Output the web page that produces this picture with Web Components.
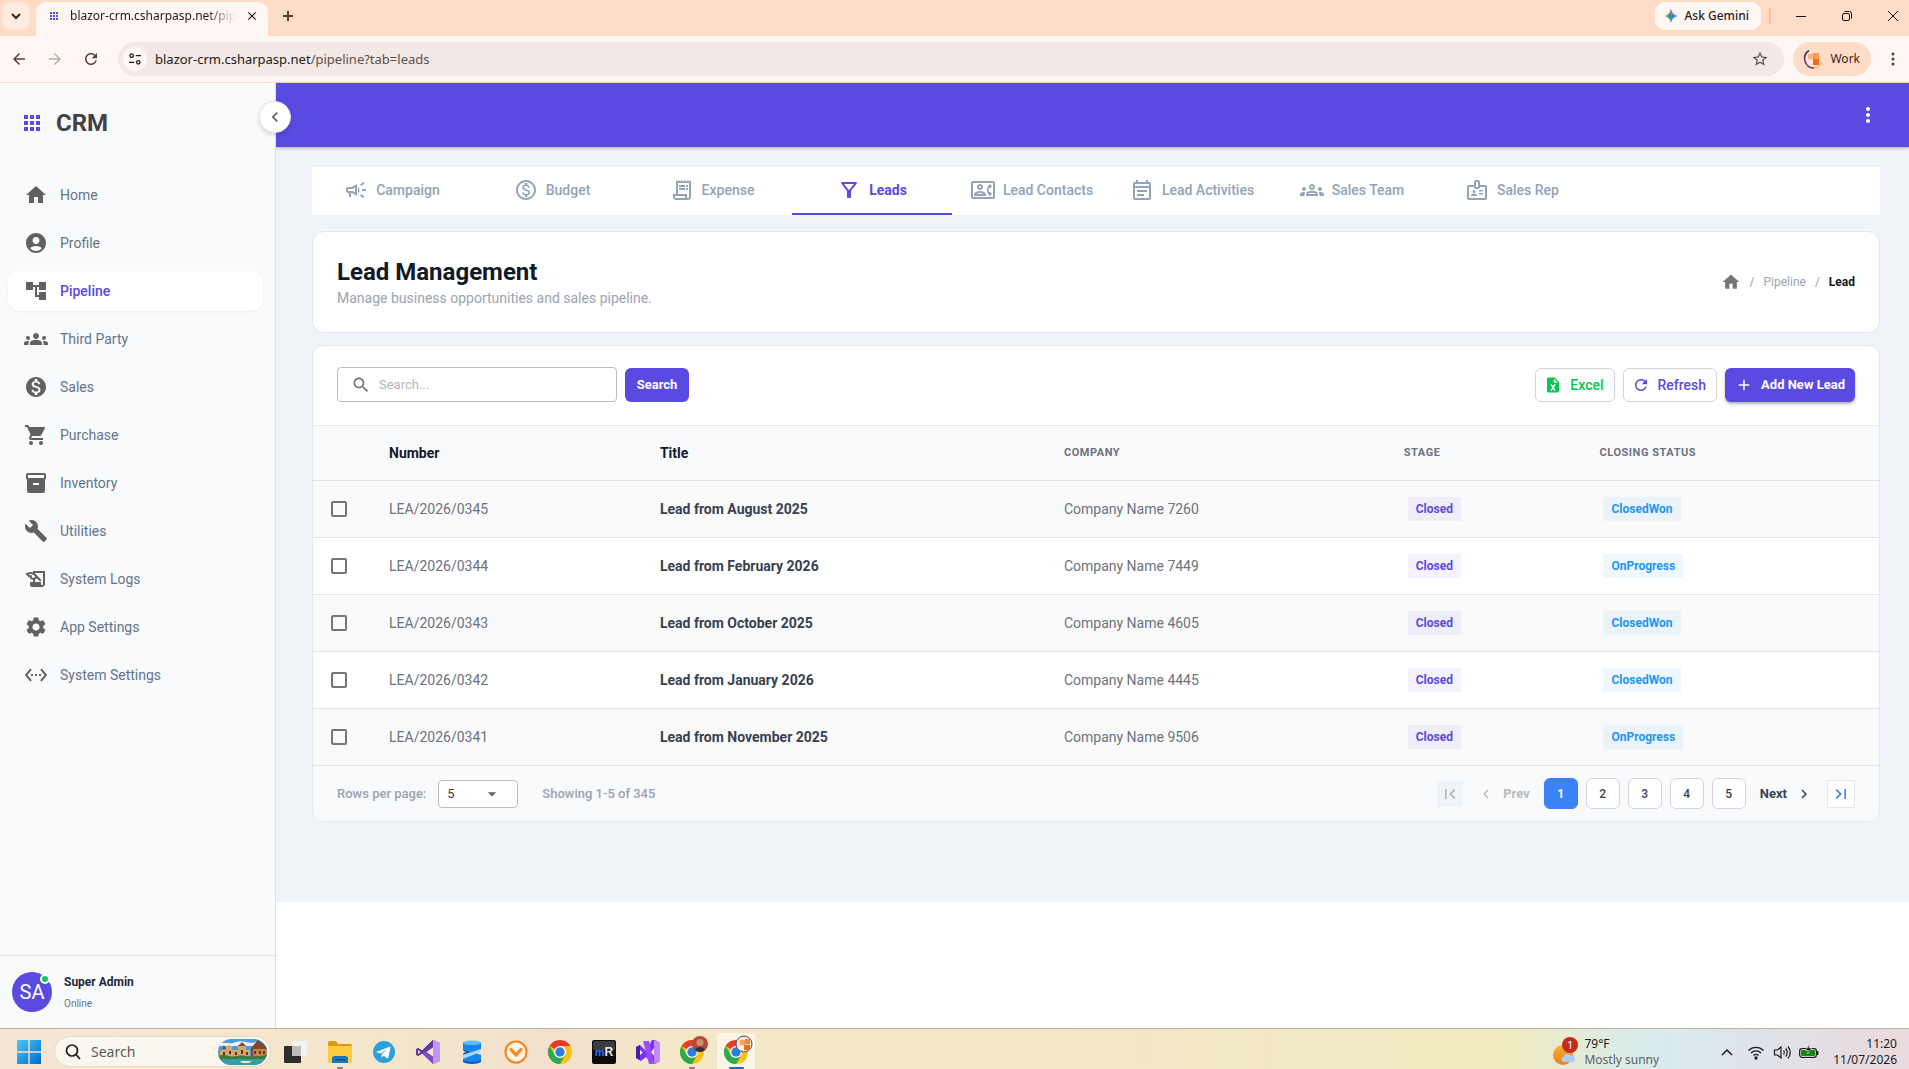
<!DOCTYPE html>
<html lang="en">
<head>
<meta charset="utf-8">
<title>CRM - Lead Management</title>
<style>
  html, body { margin: 0; }
  body {
    min-height: 100vh;
    display: flex;
    flex-direction: column;
    background: #fff;
    font-family: Roboto, "Liberation Sans", sans-serif;
    font-size: 14px;
    line-height: 20px;
    color: #424242;
  }
  crm-app { flex: 1; }
</style>
</head>
<body>
<browser-tabs></browser-tabs>
<browser-toolbar></browser-toolbar>
<crm-app>
  <crm-sidebar slot="sidebar">
    <nav-item icon="home">Home</nav-item>
    <nav-item icon="profile">Profile</nav-item>
    <nav-item icon="tree" active>Pipeline</nav-item>
    <nav-item icon="groups">Third Party</nav-item>
    <nav-item icon="money">Sales</nav-item>
    <nav-item icon="cart">Purchase</nav-item>
    <nav-item icon="inventory">Inventory</nav-item>
    <nav-item icon="build">Utilities</nav-item>
    <nav-item icon="history">System Logs</nav-item>
    <nav-item icon="settings">App Settings</nav-item>
    <nav-item icon="ethernet">System Settings</nav-item>
  </crm-sidebar>
  <app-bar slot="bar"></app-bar>
  <tab-bar>
    <tab-item icon="campaign">Campaign</tab-item>
    <tab-item icon="moneyOutline">Budget</tab-item>
    <tab-item icon="receipt">Expense</tab-item>
    <tab-item icon="filter" active>Leads</tab-item>
    <tab-item icon="contact">Lead Contacts</tab-item>
    <tab-item icon="event">Lead Activities</tab-item>
    <tab-item icon="groupsOutline">Sales Team</tab-item>
    <tab-item icon="badge">Sales Rep</tab-item>
  </tab-bar>
  <page-header>
    <span slot="title">Lead Management</span>
    <span slot="subtitle">Manage business opportunities and sales pipeline.</span>
  </page-header>
  <lead-table></lead-table>
</crm-app>
<os-taskbar></os-taskbar>

<script>
const BASE = `
  :host, *, *::before, *::after { box-sizing: border-box; }
  :host([hidden]) { display: none; }
  button, input, select { font: inherit; color: inherit; margin: 0; padding: 0; border: 0; background: none; }
  button { display: inline-flex; align-items: center; justify-content: center; cursor: pointer; }
  a { color: inherit; text-decoration: none; }
  svg { display: block; }
`;

function define(name, css, html, setup) {
  customElements.define(name, class extends HTMLElement {
    connectedCallback() {
      if (this.shadowRoot) return;
      const root = this.attachShadow({ mode: 'open' });
      root.innerHTML = `<style>${BASE}${css}</style>` + (typeof html === 'function' ? html(this) : html);
      if (setup) setup(this, root);
    }
  });
}

const SIDE_PEOPLE = 'M4 13c1.1 0 2-.9 2-2s-.9-2-2-2-2 .9-2 2 .9 2 2 2zm1.13 1.1c-.37-.06-.74-.1-1.13-.1-.99 0-1.93.21-2.78.58C.48 14.9 0 15.62 0 16.43V18h4.5v-1.61c0-.83.23-1.61.63-2.29zM20 13c1.1 0 2-.9 2-2s-.9-2-2-2-2 .9-2 2 .9 2 2 2zm4 3.43c0-.81-.48-1.53-1.22-1.85-.85-.37-1.79-.58-2.78-.58-.39 0-.76.04-1.13.1.4.68.63 1.46.63 2.29V18H24v-1.57z';
const ICONS = {
  home: 'M10 20v-6h4v6h5v-8h3L12 3 2 12h3v8z',
  profile: 'M12 2C6.48 2 2 6.48 2 12s4.48 10 10 10 10-4.48 10-10S17.52 2 12 2zm0 4c1.93 0 3.5 1.57 3.5 3.5S13.93 13 12 13s-3.5-1.57-3.5-3.5S10.07 6 12 6zm0 14c-2.03 0-4.43-.82-6.14-2.88C7.55 15.8 9.68 15 12 15s4.45.8 6.14 2.12C16.43 19.18 14.03 20 12 20z',
  tree: 'M22 11V3h-7v3H9V3H2v8h7V8h2v10h4v3h7v-8h-7v3h-2V8h2v3z',
  groups: 'M12 12.75c1.63 0 3.07.39 4.24.9 1.08.48 1.76 1.56 1.76 2.73V18H6v-1.61c0-1.18.68-2.26 1.76-2.73 1.17-.52 2.61-.91 4.24-.91zM12 6c1.66 0 3 1.34 3 3s-1.34 3-3 3-3-1.34-3-3 1.34-3 3-3z' + SIDE_PEOPLE,
  groupsOutline: SIDE_PEOPLE + 'M16.24 13.65c-1.17-.52-2.61-.9-4.24-.9s-3.07.39-4.24.9C6.68 14.13 6 15.21 6 16.39V18h12v-1.61c0-1.18-.68-2.26-1.76-2.74zM8.07 16c.09-.23.13-.39.91-.69.97-.38 1.99-.56 3.02-.56s2.05.18 3.02.56c.77.3.81.46.91.69H8.07zM12 8c.55 0 1 .45 1 1s-.45 1-1 1-1-.45-1-1 .45-1 1-1m0-2c-1.66 0-3 1.34-3 3s1.34 3 3 3 3-1.34 3-3-1.34-3-3-3z',
  money: 'M12 2C6.48 2 2 6.48 2 12s4.48 10 10 10 10-4.48 10-10S17.52 2 12 2zm1.41 16.09V20h-2.67v-1.93c-1.71-.36-3.16-1.46-3.27-3.4h1.96c.1 1.05.82 1.87 2.65 1.87 1.96 0 2.4-.98 2.4-1.59 0-.83-.44-1.61-2.67-2.14-2.48-.6-4.18-1.62-4.18-3.67 0-1.72 1.39-2.84 3.11-3.21V4h2.67v1.95c1.86.45 2.79 1.86 2.85 3.39H14.3c-.05-1.11-.64-1.87-2.22-1.87-1.5 0-2.4.68-2.4 1.64 0 .84.65 1.39 2.67 1.91s4.18 1.39 4.18 3.91c-.01 1.83-1.38 2.83-3.12 3.16z',
  moneyOutline: 'M12 2C6.48 2 2 6.48 2 12s4.48 10 10 10 10-4.48 10-10S17.52 2 12 2zm0 18c-4.41 0-8-3.59-8-8s3.59-8 8-8 8 3.59 8 8-3.59 8-8 8zm.31-8.86c-1.77-.45-2.34-.94-2.34-1.67 0-.84.79-1.43 2.1-1.43 1.38 0 1.9.66 1.94 1.64h1.71c-.05-1.34-.87-2.57-2.49-2.97V5H10.9v1.69c-1.51.32-2.72 1.3-2.72 2.81 0 1.79 1.49 2.69 3.66 3.21 1.95.46 2.34 1.15 2.34 1.87 0 .53-.39 1.39-2.1 1.39-1.6 0-2.23-.72-2.32-1.64H8.04c.1 1.7 1.36 2.66 2.86 2.97V19h2.34v-1.67c1.52-.29 2.72-1.16 2.73-2.77-.01-2.2-1.9-2.96-3.66-3.42z',
  cart: 'M7 18c-1.1 0-1.99.9-1.99 2S5.9 22 7 22s2-.9 2-2-.9-2-2-2zM1 2v2h2l3.6 7.59-1.35 2.45c-.16.28-.25.61-.25.96 0 1.1.9 2 2 2h12v-2H7.42c-.14 0-.25-.11-.25-.25l.03-.12.9-1.63h7.45c.75 0 1.41-.41 1.75-1.03l3.58-6.49c.08-.14.12-.31.12-.48 0-.55-.45-1-1-1H5.21l-.94-2H1zm16 16c-1.1 0-1.99.9-1.99 2s.89 2 1.99 2 2-.9 2-2-.9-2-2-2z',
  inventory: 'M20 2H4c-1 0-2 .9-2 2v3.01c0 .72.43 1.34 1 1.69V20c0 1.1 1.1 2 2 2h14c.9 0 2-.9 2-2V8.7c.57-.35 1-.97 1-1.69V4c0-1.1-1-2-2-2zm-5 12H9v-2h6v2zm5-7H4V4h16v3z',
  build: 'M22.7 19l-9.1-9.1c.9-2.3.4-5-1.5-6.9-2-2-5-2.4-7.4-1.3L9 6 6 9 1.6 4.7C.4 7.1.9 10.1 2.9 12.1c1.9 1.9 4.6 2.4 6.9 1.5l9.1 9.1c.4.4 1 .4 1.4 0l2.3-2.3c.5-.4.5-1.1.1-1.4z',
  history: 'M9 4v1.38c-.83-.33-1.72-.5-2.61-.5-1.79 0-3.58.68-4.95 2.05l3.33 3.33h1.11v1.11c.86.86 1.98 1.31 3.11 1.36V15H6v3c0 1.1.9 2 2 2h10c1.66 0 3-1.34 3-3V4H9zm-1.11 6.41V8.26H5.61L4.57 7.22a5.07 5.07 0 0 1 1.82-.34c1.34 0 2.59.52 3.54 1.46l1.41 1.41-.2.2a2.7 2.7 0 0 1-1.92.8c-.47 0-.93-.12-1.33-.34zM19 17c0 .55-.45 1-1 1s-1-.45-1-1v-2h-6v-2.59c.57-.23 1.1-.57 1.56-1.03l.2-.2L15.59 14H17v-1.41l-6-5.97V6h8v11z',
  settings: 'M19.14 12.94c.04-.3.06-.61.06-.94 0-.32-.02-.64-.07-.94l2.03-1.58c.18-.14.23-.41.12-.61l-1.92-3.32c-.12-.22-.37-.29-.59-.22l-2.39.96c-.5-.38-1.03-.7-1.62-.94l-.36-2.54c-.04-.24-.24-.41-.48-.41h-3.84c-.24 0-.43.17-.47.41l-.36 2.54c-.59.24-1.13.57-1.62.94l-2.39-.96c-.22-.08-.47 0-.59.22L2.74 8.87c-.12.21-.08.47.12.61l2.03 1.58c-.05.3-.09.63-.09.94s.02.64.07.94l-2.03 1.58c-.18.14-.23.41-.12.61l1.92 3.32c.12.22.37.29.59.22l2.39-.96c.5.38 1.03.7 1.62.94l.36 2.54c.05.24.24.41.48.41h3.84c.24 0 .44-.17.47-.41l.36-2.54c.59-.24 1.13-.56 1.62-.94l2.39.96c.22.08.47 0 .59-.22l1.92-3.32c.12-.22.07-.47-.12-.61l-2.01-1.58zM12 15.6c-1.98 0-3.6-1.62-3.6-3.6s1.62-3.6 3.6-3.6 3.6 1.62 3.6 3.6-1.62 3.6-3.6 3.6z',
  ethernet: 'M7.77 6.76L6.23 5.48.82 12l5.41 6.52 1.54-1.28L3.42 12l4.35-5.24zM7 13h2v-2H7v2zm10-2h-2v2h2v-2zm-6 2h2v-2h-2v2zm6.77-7.52l-1.54 1.28L20.58 12l-4.35 5.24 1.54 1.28L23.18 12l-5.41-6.52z',
  apps: 'M4 8h4V4H4v4zm6 12h4v-4h-4v4zm-6 0h4v-4H4v4zm0-6h4v-4H4v4zm6 0h4v-4h-4v4zm6-10v4h4V4h-4zm-6 4h4V4h-4v4zm6 6h4v-4h-4v4zm0 6h4v-4h-4v4z',
  left: 'M15.41 7.41L14 6l-6 6 6 6 1.41-1.41L10.83 12z',
  right: 'M10 6L8.59 7.41 13.17 12l-4.58 4.59L10 18l6-6z',
  campaign: 'M18 11v2h4v-2h-4zm-2 6.61c.96.71 2.21 1.65 3.2 2.39.4-.53.8-1.07 1.2-1.6-.99-.74-2.24-1.68-3.2-2.4-.4.54-.8 1.08-1.2 1.61zM20.4 5.6c-.4-.53-.8-1.07-1.2-1.6-.99.74-2.24 1.68-3.2 2.4.4.53.8 1.07 1.2 1.6.96-.72 2.21-1.65 3.2-2.4zM4 9c-1.1 0-2 .9-2 2v2c0 1.1.9 2 2 2h1v4h2v-4h1l5 3V6L8 9H4zm5.03 1.71L11 9.53v4.94l-1.97-1.18-.48-.29H4v-2h4.55l.48-.29zM15.5 12c0-1.33-.58-2.53-1.5-3.35v6.69c.92-.81 1.5-2.01 1.5-3.34z',
  receipt: 'M19.5 3.5L18 2l-1.5 1.5L15 2l-1.5 1.5L12 2l-1.5 1.5L9 2 7.5 3.5 6 2v14H3v3c0 1.66 1.34 3 3 3h12c1.66 0 3-1.34 3-3V2l-1.5 1.5zM15 20H6c-.55 0-1-.45-1-1v-1h10v2zm4-1c0 .55-.45 1-1 1s-1-.45-1-1v-3H8V5h11v14zM9 7h6v2H9zM16 7h2v2h-2zM9 10h6v2H9zM16 10h2v2h-2z',
  filter: 'M7 6h10l-5.01 6.3L7 6zm-2.75-.39C6.27 8.2 10 13 10 13v6c0 .55.45 1 1 1h2c.55 0 1-.45 1-1v-6s3.72-4.8 5.74-7.39c.51-.66.04-1.61-.79-1.61H5.04c-.83 0-1.3.95-.79 1.61z',
  contact: 'M22 3H2C.9 3 0 3.9 0 5v14c0 1.1.9 2 2 2h20c1.1 0 1.99-.9 1.99-2L24 5c0-1.1-.9-2-2-2zm0 16H2V5h20v14zm-2.99-1.01L21 16l-1.51-2h-1.64c-.22-.63-.35-1.3-.35-2s.13-1.37.35-2h1.64L21 8l-1.99-1.99c-1.31.98-2.28 2.37-2.73 3.99-.18.64-.28 1.31-.28 2s.1 1.36.28 2c.45 1.61 1.42 3.01 2.73 3.99zM9 12c1.65 0 3-1.35 3-3s-1.35-3-3-3-3 1.35-3 3 1.35 3 3 3zm0-4c.55 0 1 .45 1 1s-.45 1-1 1-1-.45-1-1 .45-1 1-1zm6 8.59c0-2.5-3.97-3.58-6-3.58s-6 1.08-6 3.58V18h12v-1.41zM5.48 16c.74-.5 2.22-1 3.52-1s2.77.49 3.52 1H5.48z',
  event: 'M19 4h-1V2h-2v2H8V2H6v2H5c-1.11 0-1.99.9-1.99 2L3 20c0 1.1.89 2 2 2h14c1.1 0 2-.9 2-2V6c0-1.1-.9-2-2-2zm0 16H5V10h14v10zm0-12H5V6h14v2zM7 12h10v2H7zm0 4h7v2H7z',
  badge: 'M20 7h-5V4c0-1.1-.9-2-2-2h-2c-1.1 0-2 .9-2 2v3H4c-1.1 0-2 .9-2 2v11c0 1.1.9 2 2 2h16c1.1 0 2-.9 2-2V9c0-1.1-.9-2-2-2zm-9-3h2v5h-2V4zm9 16H4V9h5c0 1.1.9 2 2 2h2c1.1 0 2-.9 2-2h5v11zM9 12a1.5 1.5 0 1 0 0 3 1.5 1.5 0 0 0 0-3zM11.08 16.18C10.44 15.9 9.74 15.75 9 15.75s-1.44.15-2.08.43c-.55.24-.92.78-.92 1.39V18h6v-.43c0-.61-.36-1.15-.92-1.39zM14 15h4v1.5h-4zM14 12h4v1.5h-4z',
  search: 'M15.5 14h-.79l-.28-.27C15.41 12.59 16 11.11 16 9.5 16 5.91 13.09 3 9.5 3S3 5.91 3 9.5 5.91 16 9.5 16c1.61 0 3.09-.59 4.23-1.57l.27.28v.79l5 4.99L20.49 19l-4.99-5zm-6 0C7.01 14 5 11.99 5 9.5S7.01 5 9.5 5 14 7.01 14 9.5 11.99 14 9.5 14z',
  refresh: 'M17.65 6.35C16.2 4.9 14.21 4 12 4c-4.42 0-7.99 3.58-7.99 8s3.57 8 7.99 8c3.73 0 6.84-2.55 7.73-6h-2.08c-.82 2.33-3.04 4-5.65 4-3.31 0-6-2.69-6-6s2.69-6 6-6c1.66 0 3.14.69 4.22 1.78L13 11h7V4l-2.35 2.35z',
  excel: 'M14 2H6c-1.1 0-2 .9-2 2v16c0 1.1.9 2 2 2h12c1.1 0 2-.9 2-2V8l-6-6zm-1 7V3.500L18.500 9H13zM8.400 11h2.200l1.500 2.800 1.500-2.800h2.200l-2.600 4.300 2.700 4.500h-2.200l-1.600-2.900-1.600 2.900H8.300l2.700-4.500z',
  add: 'M19 13h-6v6h-2v-6H5v-2h6V5h2v6h6v2z',
  first: 'M18.41 16.59L13.82 12l4.59-4.59L17 6l-6 6 6 6zM6 6h2v12H6z',
  last: 'M5.59 7.41L10.18 12l-4.59 4.59L7 18l6-6-6-6zM16 6h2v12h-2z',
  drop: 'M7 10l5 5 5-5z',
  more: 'M12 8c1.1 0 2-.9 2-2s-.9-2-2-2-2 .9-2 2 .9 2 2 2zm0 2c-1.100 0-2 .9-2 2s.9 2 2 2 2-.9 2-2-.9-2-2-2zm0 6c-1.100 0-2 .9-2 2s.9 2 2 2 2-.9 2-2-.9-2-2-2z',
  star: 'M22 9.240l-7.190-.62L12 2 9.190 8.630 2 9.240l5.460 4.730L5.820 21 12 17.270 18.180 21l-1.630-7.030L22 9.240zM12 15.400l-3.760 2.270 1-4.280-3.320-2.880 4.380-.38L12 6.100l1.710 4.040 4.380.38-3.320 2.880 1 4.280L12 15.400z',
  back: 'M20 11H7.830l5.590-5.590L12 4l-8 8 8 8 1.410-1.410L7.830 13H20v-2z',
  forward: 'M12 4l-1.410 1.410L16.170 11H4v2h12.170l-5.580 5.590L12 20l8-8z',
  close: 'M19 6.410L17.590 5 12 10.590 6.410 5 5 6.410 10.590 12 5 17.590 6.410 19 12 13.410 17.590 19 19 17.590 13.410 12z',
  tune: 'M7 3.500a3.500 3.500 0 0 1 3.400 2.600 3.500 3.500 0 1 1-3.400-2.600zM7 5.400a1.600 1.600 0 1 0 0 3.200 1.600 1.600 0 0 0 0-3.200zM13 6h8v2h-8zM3 16h8v2H3zM17 13.500a3.500 3.500 0 1 1 0 7 3.500 3.500 0 0 1 0-7zm0 1.900a1.600 1.600 0 1 0 0 3.200 1.600 1.600 0 0 0 0-3.200z'
};
const EVENODD = ['excel', 'tune'];

/* Monochrome icon: <x-icon name="home" size="24"> */
define('x-icon', `
  :host { display: inline-flex; flex: none; }
`, el => {
  const s = el.getAttribute('size') || 24;
  const n = el.getAttribute('name');
  return `<svg width="${s}" height="${s}" viewBox="0 0 24 24" fill="currentColor" aria-hidden="true"><path fill-rule="${EVENODD.includes(n) ? 'evenodd' : 'nonzero'}" d="${ICONS[n]}"/></svg>`;
});

/* ---------- Browser chrome ---------- */
define('browser-tabs', `
  :host { display: flex; align-items: flex-start; height: 36px; padding: 2px 0 0 2px; background: #ffdcc8; color: #3b1f10;
          font: 12px/16px "Noto Sans", "Open Sans", sans-serif; }
  .round { width: 28px; height: 28px; border-radius: 10px; background: #ffebe0; }
  .tab { display: flex; align-items: center; gap: 8px; width: 232px; height: 34px; margin: 0 10px 0 6px; padding: 0 8px 6px 10px;
         background: #fff7f4; border-radius: 10px 10px 0 0; color: #1f1a18; }
  .tab .title { flex: 1; min-width: 0; white-space: nowrap;
         -webkit-mask-image: linear-gradient(90deg, #000 82%, transparent); mask-image: linear-gradient(90deg, #000 82%, transparent); }
  .tab button { height: 16px; width: 16px; }
  .fav { display: flex; color: #594ae2; padding: 2px; }
  .new { width: 20px; height: 28px; color: #5a3d2c; }
  .fill { flex: 1; }
  .gem { gap: 6px; height: 28px; padding: 0 12px 0 9px; border-radius: 10px; background: #fff7f4; color: #2b211d; font-weight: 500; }
  .sep { width: 2px; height: 16px; margin: 6px 14px 0 8px; background: #ffbc90; }
  .controls { display: flex; gap: 14px; }
  .controls button { width: 32px; height: 28px; color: #111; }
`, `
  <button class="round" aria-label="Search tabs"><svg width="10" height="7" viewBox="0 0 10 7"><path d="M1 1l4 4 4-4" fill="none" stroke="#3b1f10" stroke-width="2"/></svg></button>
  <div class="tab">
    <span class="fav"><x-icon name="apps" size="12"></x-icon></span>
    <span class="title">blazor-crm.csharpasp.net/pipeli</span>
    <button aria-label="Close tab"><x-icon name="close" size="14"></x-icon></button>
  </div>
  <button class="new" aria-label="New tab"><svg width="12" height="12" viewBox="0 0 12 12"><path d="M6 1v10M1 6h10" stroke="currentColor" stroke-width="2"/></svg></button>
  <div class="fill"></div>
  <button class="gem">
    <svg width="14" height="14" viewBox="0 0 14 14"><defs><linearGradient id="g" x1="0" y1="0" x2="1" y2="0"><stop offset="0" stop-color="#f9bd1a"/><stop offset=".35" stop-color="#34a26a"/><stop offset=".55" stop-color="#3b82f6"/><stop offset="1" stop-color="#3186ff"/></linearGradient></defs><path d="M7 0c.7 3.900 3.100 6.300 7 7-3.900.7-6.300 3.100-7 7-.7-3.900-3.100-6.300-7-7 3.900-.7 6.300-3.100 7-7z" fill="url(#g)"/><path d="M7 0c.7 3.900 2 5 2 5L5 5s1.300-1.100 2-5z" fill="#e8535a"/></svg>
    Ask Gemini</button>
  <span class="sep"></span>
  <div class="controls">
    <button aria-label="Minimize"><svg width="10" height="10"><path d="M0 5.500h10" stroke="currentColor"/></svg></button>
    <button aria-label="Restore"><svg width="10" height="10" fill="none" stroke="currentColor"><rect x=".5" y="2.500" width="7" height="7" rx="1.500"/><path d="M2.500 .5h5a2 2 0 0 1 2 2v5"/></svg></button>
    <button aria-label="Close"><svg width="10" height="10"><path d="M0 0l10 10M10 0L0 10" stroke="currentColor"/></svg></button>
  </div>
`);

define('browser-toolbar', `
  :host { display: flex; align-items: center; height: 47px; padding: 0 7px 0 10px; background: #fff7f4; border-bottom: 1px solid #f3dccb; color: #5a4034;
          font: 14px/20px "Noto Sans", "Open Sans", sans-serif; }
  .nav { width: 18px; height: 18px; margin-right: 18px; }
  .nav[disabled] { color: #b9aca6; }
  .box { flex: 1; display: flex; align-items: center; gap: 8px; height: 34px; padding: 0 15px 0 5px; border-radius: 17px; background: #f2e8e6; color: #5b514d; }
  .info { width: 24px; height: 24px; border-radius: 12px; background: #fff8f5; color: #1f1a18; }
  .url { flex: 1; font-size: 13px; }
  .url b { font-weight: 400; color: #1f1a18; }
  .work { gap: 6px; height: 34px; margin: 0 13px 0 9px; padding: 0 11px 0 9px; border-radius: 17px; background: #ffdcc8; color: #3b1f10; font-size: 12px; }
`, `
  <button class="nav" aria-label="Back"><x-icon name="back" size="18"></x-icon></button>
  <button class="nav" aria-label="Forward" disabled><x-icon name="forward" size="18"></x-icon></button>
  <button class="nav" aria-label="Reload"><x-icon name="refresh" size="18"></x-icon></button>
  <div class="box">
    <button class="info" aria-label="Site information"><x-icon name="tune" size="16"></x-icon></button>
    <span class="url"><b>blazor-crm.csharpasp.net</b>/pipeline?tab=leads</span>
    <button aria-label="Bookmark"><x-icon name="star" size="18"></x-icon></button>
  </div>
  <button class="work">
    <svg width="22" height="22" viewBox="0 0 22 22" fill="none"><path d="M7 2.500A9.500 9.500 0 0 0 12 20" stroke="#3d4257" stroke-width="1.500"/><path d="M12 20a9.500 9.500 0 0 0 8-6" stroke="#ff9a52"/><path d="M6 6h5v5H6z" fill="#ffb37a"/><path d="M11 5h6v6h-6z" fill="#ff9a52"/><path d="M11 11h6v6h-6z" fill="#f76a10"/><path d="M7 12h4v4H7z" fill="#fff0e4"/></svg>
    Work</button>
  <button aria-label="Menu"><svg width="18" height="18"><g fill="currentColor"><circle cx="9" cy="4" r="1.500"/><circle cx="9" cy="9" r="1.500"/><circle cx="9" cy="14" r="1.500"/></g></svg></button>
`);

/* ---------- Application shell ---------- */
define('crm-app', `
  :host { display: flex; }
  .main { flex: 1; min-width: 0; }
  .content { display: flex; flex-direction: column; padding: 20px 29px 80px 36px; background: #f0f3f8; }
`, `
  <slot name="sidebar"></slot>
  <div class="main">
    <slot name="bar"></slot>
    <main class="content"><slot></slot></main>
  </div>
`);

define('crm-sidebar', `
  :host { position: relative; z-index: 2; display: flex; flex-direction: column; flex: none; width: 276px; background: #f9fafc; border-right: 1px solid #e0e0e2; }
  .brand { display: flex; align-items: center; gap: 12px; height: 80px; padding: 0 20px; font-size: 24px; line-height: 32px; font-weight: 700; color: #424242; }
  .brand x-icon { color: #594ae2; }
  nav { flex: 1; display: flex; flex-direction: column; gap: 8px; padding: 12px 12px 12px 8px; }
  .toggle { position: absolute; top: 18px; right: -16px; width: 32px; height: 32px; border-radius: 50%; background: #fff; border: 1px solid #e5e7eb; box-shadow: 0 2px 5px rgba(0,0,0,.15); color: #616161; }
  .user { display: flex; align-items: center; gap: 12px; padding: 16px 12px; height: 73px; border-top: 1px solid #e0e0e2; }
  .avatar { position: relative; display: flex; align-items: center; justify-content: center; width: 40px; height: 40px; border-radius: 50%; background: #594ae2; color: #fff; font-size: 20px; }
  .dot { position: absolute; top: 2px; right: 2px; width: 10px; height: 10px; border-radius: 50%; background: #00c853; border: 2px solid #fff; }
  .who { display: flex; flex-direction: column; gap: 4px; font-size: 10px; line-height: 16px; color: #64748b; }
  .who b { font-size: 12px; line-height: 20px; font-weight: 700; color: #1e293b; }
`, `
  <div class="brand"><x-icon name="apps" size="24"></x-icon><span>CRM</span></div>
  <button class="toggle" aria-label="Collapse sidebar"><x-icon name="left" size="20"></x-icon></button>
  <nav><slot></slot></nav>
  <div class="user">
    <div class="avatar">SA<span class="dot"></span></div>
    <div class="who"><b>Super Admin</b><span>Online</span></div>
  </div>
`);

define('nav-item', `
  :host { display: block; }
  a { display: flex; align-items: center; gap: 12px; height: 40px; padding: 0 16px; border-radius: 12px; color: #64748b; }
  x-icon { color: #616161; }
  :host([active]) a { background: #fff; color: #594ae2; font-weight: 500; box-shadow: 0 1px 3px rgba(0,0,0,.05); }
`, el => `<a href="#"><x-icon name="${el.getAttribute('icon')}"></x-icon><slot></slot></a>`);

define('app-bar', `
  :host { position: relative; z-index: 1; display: flex; align-items: center; justify-content: flex-end; height: 64px; padding: 0 29px; background: #594ae2; color: #fff; box-shadow: 0 1px 3px rgba(0,0,0,.3); }
`, `<button aria-label="More options"><x-icon name="more" size="24"></x-icon></button>`);

define('tab-bar', `
  :host { display: flex; height: 48px; margin-bottom: 16px; background: #fff; }
`, `<slot></slot>`);

define('tab-item', `
  :host { display: block; width: 160px; }
  a { display: flex; align-items: center; justify-content: center; gap: 8px; height: 48px; border-bottom: 2px solid transparent; color: #94a3b8; font-weight: 500; white-space: nowrap; }
  :host([active]) a { color: #594ae2; border-color: #594ae2; font-weight: 700; }
`, el => `<a href="#"><x-icon name="${el.getAttribute('icon')}"></x-icon><slot></slot></a>`);

define('page-header', `
  :host { display: flex; align-items: center; justify-content: space-between; margin-bottom: 12px; padding: 24px; background: #fff; border: 1px solid #e5e7eb; border-radius: 12px; }
  h1 { margin: 0; font-size: 24px; line-height: 32px; font-weight: 700; color: #111827; }
  p { margin: 0; color: #9ca3af; }
  nav { display: flex; align-items: center; gap: 9px; font-size: 12px; color: #9ca3af; }
  nav a { display: flex; }
  nav x-icon { color: #757575; }
  nav b { font-weight: 700; color: #111827; }
`, `
  <div><h1><slot name="title"></slot></h1><p><slot name="subtitle"></slot></p></div>
  <nav aria-label="Breadcrumb"><a href="#" aria-label="Home"><x-icon name="home" size="20"></x-icon></a><span>/</span><a href="#">Pipeline</a><span>/</span><b>Lead</b></nav>
`);

/* ---------- Lead table ---------- */
define('status-chip', `
  :host { display: inline-flex; align-items: center; height: 24px; margin-left: 4px; padding: 0 8px; background: rgba(89,74,226,.07); color: #594ae2; font-size: 12px; line-height: 16px; font-weight: 700; }
  :host([tone="info"]) { background: rgba(33,150,243,.07); color: #2196f3; }
`, `<slot></slot>`);

const LEADS = [
  ['LEA/2026/0345', 'Lead from August 2025', 'Company Name 7260', 'Closed', 'ClosedWon'],
  ['LEA/2026/0344', 'Lead from February 2026', 'Company Name 7449', 'Closed', 'OnProgress'],
  ['LEA/2026/0343', 'Lead from October 2025', 'Company Name 4605', 'Closed', 'ClosedWon'],
  ['LEA/2026/0342', 'Lead from January 2026', 'Company Name 4445', 'Closed', 'ClosedWon'],
  ['LEA/2026/0341', 'Lead from November 2025', 'Company Name 9506', 'Closed', 'OnProgress']
];

define('lead-table', `
  :host { display: block; overflow: hidden; background: #fff; border: 1px solid #e5e7eb; border-radius: 12px; }
  .tools { display: flex; align-items: flex-end; gap: 8px; padding: 21px 24px 23px; border-bottom: 1px solid #e5e7eb; }
  .field { display: flex; align-items: center; gap: 8px; width: 280px; height: 35px; padding: 0 13px; border: 1px solid #bdbdbd; border-radius: 4px; color: #757575; }
  .field input { flex: 1; min-width: 0; font-size: 13px; outline: 0; }
  .field input::placeholder { color: #b5b5b5; opacity: 1; }
  .fill { flex: 1; }
  .btn { gap: 8px; min-width: 64px; height: 34px; padding: 0 10px; border-radius: 6px; font-size: 14px; font-weight: 500; }
  .out { padding-left: 8px; border: 1px solid #d1d5db; color: #594ae2; background: #fff; }
  .excel { color: #00c853; }
  .solid { background: #594ae2; color: #fff; font-size: 13px; font-weight: 700; }
  .raised { box-shadow: 0 2px 3px rgba(0,0,0,.3); }
  table { width: 100%; table-layout: fixed; border-collapse: separate; border-spacing: 0; text-align: left; }
  th, td { padding: 0 16px; border-bottom: 1px solid #e2e4e8; white-space: nowrap; }
  th { height: 55px; background: #f9fafc; font-size: 11px; font-weight: 700; color: #6b7280; text-transform: uppercase; letter-spacing: 0.05em; }
  th.main { font-size: 14px; color: #111827; text-transform: none; letter-spacing: normal; }
  td { height: 57px; color: #6b7280; }
  tbody tr:nth-child(odd) td { background: #fafafa; }
  td.title { font-weight: 700; color: #374151; }
  td.pick { padding: 0 18px; }
  td.pick input { display: block; appearance: none; width: 16px; height: 16px; border: 2px solid #757575; border-radius: 2px; }
`, `
  <div class="tools">
    <label class="field"><x-icon name="search" size="20"></x-icon><input type="text" placeholder="Search..." aria-label="Search leads"></label>
    <button class="btn solid">Search</button>
    <span class="fill"></span>
    <button class="btn out excel"><x-icon name="excel" size="18"></x-icon>Excel</button>
    <button class="btn out"><x-icon name="refresh" size="18"></x-icon>Refresh</button>
    <button class="btn solid raised"><x-icon name="add" size="18"></x-icon>Add New Lead</button>
  </div>
  <table>
    <colgroup><col style="width:60px"><col style="width:17.3%"><col style="width:25.8%"><col style="width:21.7%"><col style="width:12.5%"><col></colgroup>
    <thead><tr><th></th><th class="main">Number</th><th class="main">Title</th><th>Company</th><th>Stage</th><th>Closing Status</th></tr></thead>
    <tbody>${LEADS.map(([n, t, c, s, k]) => `
      <tr><td class="pick"><input type="checkbox" aria-label="Select ${n}"></td><td>${n}</td><td class="title">${t}</td><td>${c}</td>
      <td><status-chip>${s}</status-chip></td><td><status-chip tone="info">${k}</status-chip></td></tr>`).join('')}
    </tbody>
  </table>
  <data-pager></data-pager>
`);

define('data-pager', `
  :host { display: flex; align-items: center; justify-content: space-between; height: 55px; padding: 0 24px; background: #f9fafc; font-size: 13px; line-height: 16px; font-weight: 500; color: #9ca3af; }
  .side { display: flex; align-items: center; gap: 12px; }
  .select { position: relative; display: flex; margin-right: 12px; color: #424242; }
  select { appearance: none; width: 80px; height: 28px; padding: 0 8px; border: 1px solid #bdbdbd; border-radius: 4px; font-size: 13px; font-weight: 400; background: #fff; }
  .select x-icon { position: absolute; right: 16px; top: 4px; color: #616161; pointer-events: none; }
  .pages { display: flex; align-items: center; gap: 8px; }
  .page { width: 34px; height: 31px; border: 1px solid #d1d5db; border-radius: 6px; background: #fff; color: #374151; font-size: 12px; font-weight: 500; }
  .page.on { background: #3b82f6; border-color: #3b82f6; color: #fff; font-weight: 700; }
  .edge { width: 28px; height: 28px; background: #fff; border: 1px solid #e5e7eb; color: #3b82f6; }
  .edge[disabled] { width: 26px; height: 26px; background: #f0f3f8; border: 0; color: #b0b4ba; }
  .step { gap: 8px; padding: 0 6px; font-weight: 700; color: #374151; }
  .step[disabled] { color: #b8babd; }
`, `
  <div class="side">
    <label for="rows">Rows per page:</label>
    <span class="select"><select id="rows"><option>5</option><option>10</option><option>25</option></select><x-icon name="drop" size="20"></x-icon></span>
    <span>Showing 1-5 of 345</span>
  </div>
  <nav class="pages" aria-label="Pagination">
    <button class="edge" disabled aria-label="First page"><x-icon name="first" size="20"></x-icon></button>
    <button class="step" disabled><x-icon name="left" size="18"></x-icon>Prev</button>
    <button class="page on">1</button><button class="page">2</button><button class="page">3</button><button class="page">4</button><button class="page">5</button>
    <button class="step">Next<x-icon name="right" size="18"></x-icon></button>
    <button class="edge" aria-label="Last page"><x-icon name="last" size="20"></x-icon></button>
  </nav>
`);

/* ---------- Desktop taskbar ---------- */
const CHROME = `<circle cx="12" cy="12" r="12" fill="#fbc116"/><path d="M12 12L1.600 6A12 12 0 0 1 22.400 6H12z" fill="#e33b2e"/><path d="M6.800 15L1.600 6A12 12 0 0 0 12 24l5.200-9z" fill="#2da94f"/><circle cx="12" cy="12" r="6" fill="#fff"/><circle cx="12" cy="12" r="4.700" fill="#2f7de1"/>`;
const APPS = {
  start: `<defs><linearGradient id="w" x1="0" y1="0" x2="1" y2="1"><stop offset="0" stop-color="#4cc9f7"/><stop offset="1" stop-color="#0067c8"/></linearGradient></defs><path d="M0 0h11.300v11.300H0zM12.700 0H24v11.300H12.700zM0 12.700h11.300V24H0zM12.700 12.700H24V24H12.700z" fill="url(#w)"/>`,
  taskview: `<rect x="8" y="1" width="15" height="15" rx="1" fill="#f3f3f3"/><rect x="0" y="6" width="17" height="17" rx="1" fill="#2d2d2d"/><path d="M8 6h9v10H8z" fill="#bdbdbd"/>`,
  folder: `<path d="M0 3a2 2 0 0 1 2-2h6l2 3h12a2 2 0 0 1 2 2v4H0z" fill="#d99a10"/><path d="M0 6h24v15a2 2 0 0 1-2 2H2a2 2 0 0 1-2-2z" fill="#fdcb3e"/><path d="M4 23v-4a3 3 0 0 1 3-3h10a3 3 0 0 1 3 3v4z" fill="#1378c4"/><path d="M7 19h10v1.500H7z" fill="#0b4f87"/>`,
  telegram: `<circle cx="12" cy="12" r="11" fill="#2aa1dc"/><path d="M4.800 11.800l12.700-5c.7-.3 1.200.2 1 1l-2.100 9.800c-.2.8-.7.9-1.300.6l-3.300-2.500-1.700 1.600c-.3.3-.5.2-.5-.3l.2-2.900 5.600-5-6.900 4.400-3.500-1.100c-.6-.2-.6-.4-.2-.6z" fill="#fff"/>`,
  vs: `<path d="M17 0l7 3v18l-7 3L6 13.500 2 16l-2-1.500v-5L2 8l4 2.500z" fill="#7a4fc0"/><path d="M17 0L6 10.500 2 8 0 9.500v5L2 16l15-9z" fill="#5d3a9b"/><path d="M17 0l7 3v18l-7 3z" fill="#c495f5"/><path d="M17 7.500v9L10.500 12zM2 10v4l2.500-2z" fill="#f4e6cf"/>`,
  db: `<path d="M3 2h18v7l-8 3 8 3v7H3v-7l8-3-8-3z" fill="#1486ea"/><ellipse cx="12" cy="2.800" rx="9" ry="2.300" fill="#5cbcff"/><path d="M3 9l8 3-8 3c0-2 1-2.500 3-3-2-.5-3-1-3-3z" fill="#0a57c2"/><path d="M21 9c0 2-1 3-3 4l-15 6v-4z" fill="#a5daff"/><path d="M3 20c4 2.500 14 2.500 18 0v2c-4 2.500-14 2.500-18 0z" fill="#0a57c2"/>`,
  v: `<circle cx="12" cy="12" r="10.500" fill="#fff4e4" stroke="#f5871f" stroke-width="2.200"/><path d="M7 9.500l5 5.500 5-5.500" fill="none" stroke="#f5871f" stroke-width="3.200" stroke-linecap="round" stroke-linejoin="round"/>`,
  chrome: CHROME,
  mr: `<rect width="24" height="24" rx="2" fill="#0d0d0f"/><rect x="1" y="1" width="22" height="9" rx="2" fill="#3b3b3f"/>`,
  vs2: `<path d="M0 7l4-2 6 6 6-11h3l5 3v18l-5 3h-3l-6-7-5 4-5-3z" fill="#7b2ff2"/><path d="M0 7l4-2v15l-4-2z" fill="#4a1fa8"/><path d="M18 0l6 3v18l-6 3z" fill="#c08bff"/><path d="M7 1h6l5 23h-5z" fill="#9a4bff"/><path d="M18 8v8l-3-4zM4 10v5l3-2.500z" fill="#f6e8c8"/>`,
  chromeA: CHROME + `<circle cx="20" cy="4" r="8" fill="#b7473e"/><circle cx="20" cy="2.500" r="3.500" fill="#c8906f"/><path d="M15 10c1-4 9-4 10 0a8 8 0 0 1-10 0z" fill="#33303a"/>`,
  chromeB: CHROME + `<circle cx="20" cy="4" r="8" fill="#f6e2cb" stroke="#5a5560"/><path d="M16 0h5v5h-5z" fill="#f2a15c"/><path d="M21-1h5v5h-5z" fill="#f28a36"/><path d="M20 5h6v5h-6z" fill="#ef6c14"/><path d="M16 6h4v4h-4z" fill="#fff"/>`
};

define('task-app', `
  :host { display: block; flex: none; width: 38px; }
  button { position: relative; width: 38px; height: 38px; border-radius: 4px 4px 0 0; }
  svg { overflow: visible; }
  :host([active]) button { background: #fbf5e6; }
  :host([running]) button::after { content: ""; position: absolute; left: 16px; bottom: 2px; width: 6px; height: 2px; border-radius: 1px; background: #857f73; }
  :host([active]) button::after { left: 12px; width: 15px; background: #0078d4; }
  .mr { position: absolute; font: 700 12px/16px "Liberation Sans", sans-serif; color: #e8e8e8; }
  .mr i { font-style: normal; color: #2a6df5; font-size: 11px; }
`, el => {
  const k = el.getAttribute('app');
  return `<button aria-label="${k}"><svg width="24" height="24" viewBox="0 0 24 24">${APPS[k]}</svg>${k === 'mr' ? '<span class="mr"><i>m</i>R</span>' : ''}</button>`;
});

define('os-taskbar', `
  :host { display: flex; align-items: flex-start; gap: 6px; height: 41px; padding: 4px 12px 0 10px; overflow: hidden; border-top: 1px solid #b9b3a6; color: #1b1b1b;
          background: linear-gradient(90deg, #f6e5d3 0%, #f5e6cb 20%, #f2e0cd 29%, #f5e8c8 36%, #f3e8c6 60%, #f0ebc0 79%, #d8ecec 86%, #dfe2ea 92%, #e9dadd 100%);
          font: 12px/16px "Noto Sans", "Open Sans", sans-serif; }
  .pill { display: flex; flex: none; align-items: center; gap: 10px; width: 217px; height: 31px; margin-top: 3px; padding: 0 3px 0 10px; border: 1px solid #e3d9c6; border-radius: 16px; background: #fcf7ee; color: #1b1b1b; }
  .pill input { flex: 1; min-width: 0; font-size: 14px; outline: 0; }
  .pill input::placeholder { color: #5d5a55; opacity: 1; }
  .fill { flex: 1; }
  .tray { display: flex; align-items: center; height: 36px; padding-top: 2px; }
  .weather { gap: 6px; margin-right: 50px; }
  .lines { display: flex; flex-direction: column; white-space: nowrap; }
  .lines small { font-size: 12px; color: #5f5f5f; }
  .clock { text-align: right; margin-left: 6px; }
  .weather svg text { font: 11px "Noto Sans", sans-serif; fill: #fff; }
  .sys { gap: 8px; }
`, `
  <task-app app="start"></task-app>
  <label class="pill">
    <svg width="16" height="16" viewBox="0 0 16 16" fill="none" stroke="currentColor" stroke-width="1.700"><circle cx="7" cy="6.500" r="5.500"/><path d="M11 10.500l4 4.500"/></svg>
    <input type="text" placeholder="Search" aria-label="Search the desktop">
    <svg width="49" height="26" viewBox="0 0 49 26"><defs><clipPath id="c"><rect width="49" height="26" rx="13"/></clipPath></defs><g clip-path="url(#c)"><path fill="#4e9be0" d="M0 0h49v26H0z"/><path fill="#e9f2fa" d="M0 5c6-3 12 1 18-2 8-3 12 3 20 0v4H0z"/><path fill="#d9a76a" d="M2 11h6V8l3-2 3 2v3h6V7l4-3 4 3v4h4v9H2z"/><path fill="#7b4a2e" d="M4 10l2-4 2 4zM20 7l4-4 4 4zM33 9l7-8 9 7v12H33z"/><path fill="#c9844c" d="M35 10h14v9H35z"/><path fill="#5a3520" d="M36 12h2v3h-2zM41 12h2v3h-2zM45 12h2v3h-2zM5 13h2v3H5zM11 12h2v3h-2zM17 13h2v3h-2zM23 11h2v4h-2zM28 13h2v3h-2z"/><path fill="#3f7a3a" d="M0 17c8-3 12 2 18 0s14 2 31-1v5H0z"/><path fill="#2f9fa5" d="M0 20h49v6H0z"/><path fill="#f0e6c8" d="M22 22h12l-3 2h-7z"/></g></svg>
  </label>
  <task-app app="taskview"></task-app>
  <task-app app="folder" running></task-app>
  <task-app app="telegram"></task-app>
  <task-app app="vs"></task-app>
  <task-app app="db"></task-app>
  <task-app app="v"></task-app>
  <task-app app="chrome"></task-app>
  <task-app app="mr"></task-app>
  <task-app app="vs2"></task-app>
  <task-app app="chromeA" running></task-app>
  <task-app app="chromeB" running active></task-app>
  <span class="fill"></span>
  <div class="tray weather">
    <svg width="26" height="30" viewBox="0 0 26 30"><defs><linearGradient id="s" x1="0" y1="0" x2="0" y2="1"><stop offset="0" stop-color="#f9b233"/><stop offset="1" stop-color="#f07c1c"/></linearGradient></defs><circle cx="11" cy="18" r="10" fill="url(#s)"/><path d="M11 25a3 3 0 0 1 0-5 4.500 4.500 0 0 1 8-1 3 3 0 0 1 2 6z" fill="#a9cdf5"/><circle cx="18" cy="8" r="8" fill="#c42b1c"/><text x="15" y="12">1</text></svg>
    <div class="lines"><span>79°F</span><small>Mostly sunny</small></div>
  </div>
  <div class="tray sys">
    <svg width="24" height="18" viewBox="-3 0 24 18" fill="none" stroke="currentColor" stroke-width="1.500"><path d="M4 12l5-5 5 5"/></svg>
    <svg width="18" height="18" viewBox="0 0 18 18" fill="none" stroke="currentColor" stroke-width="1.300"><path d="M1.500 7.500a10.500 10.500 0 0 1 15 0M4 10a7 7 0 0 1 10 0M6.500 12.500a3.500 3.500 0 0 1 5 0"/><circle cx="9" cy="15" r="1" fill="currentColor"/></svg>
    <svg width="18" height="18" viewBox="0 0 18 18" fill="none" stroke="currentColor" stroke-width="1.200"><path d="M1.500 7h3L8 4v11l-3.500-3h-3zM10.500 7.500c1 1 1 3 0 4M12.700 5.500c2 2.200 2 5.800 0 8M14.900 3.500c3 3.200 3 8.800 0 12"/></svg>
    <svg width="20" height="18" viewBox="0 0 20 18"><rect x=".7" y="5.700" width="16.600" height="8.600" rx="2.200" fill="#fff" stroke="#1b1b1b" stroke-width="1.300"/><rect x="2" y="7" width="14" height="6" rx="1" fill="#0f8a0f"/><path d="M18.700 8v4" stroke="#1b1b1b" stroke-width="1.400"/><path d="M10.500 1L6.500 7.500h3L8.500 11l4.500-6h-3z" fill="#1b1b1b" stroke="#e4e4ea" stroke-width=".6"/></svg>
    <div class="lines clock"><span>11:20</span><span>11/07/2026</span></div>
  </div>
`);
</script>
</body>
</html>
